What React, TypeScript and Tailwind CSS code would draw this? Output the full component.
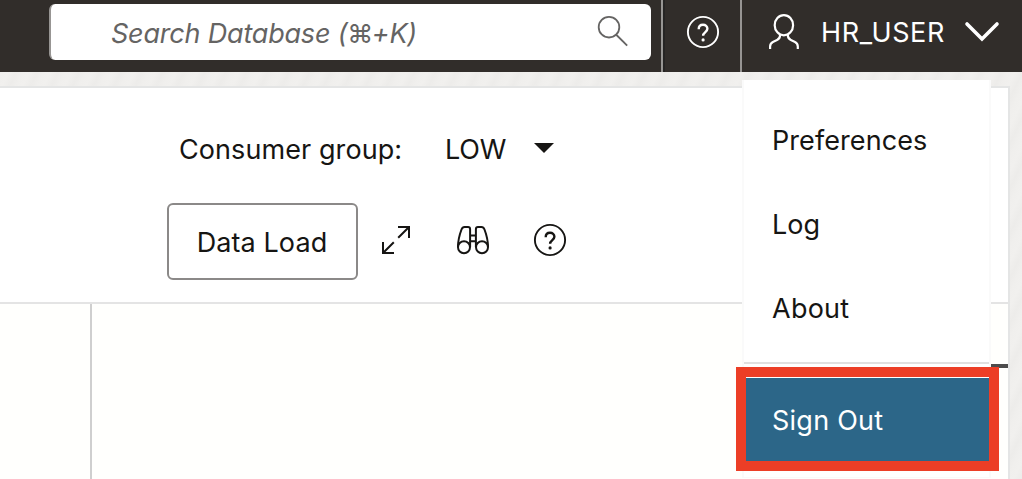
import React from "react";

function HelpIcon({ className }: { className: string }) {
  return (
    <svg className={className} width="34" height="34" viewBox="0 0 34 34" fill="none" stroke="currentColor" strokeWidth="1.9">
      <circle cx="17" cy="17" r="15.1" />
      <path d="M12.7 14.2c0-2.7 1.8-4.5 4.3-4.5s4.4 1.7 4.4 4.1c0 3.1-4.3 3.5-4.3 6.9" strokeWidth="2.4" />
      <circle cx="17.1" cy="24.9" r="1.6" fill="currentColor" stroke="none" />
    </svg>
  );
}

function SearchIcon() {
  return (
    <svg className="text-[#656463]" width="32" height="32" viewBox="0 0 32 32" fill="none" stroke="currentColor" strokeWidth="1.8">
      <circle cx="12" cy="11.2" r="10.3" />
      <path d="M19 18.5l11.2 11.2" />
    </svg>
  );
}

function UserIcon() {
  return (
    <svg width="32" height="36" viewBox="0 0 32 36" fill="none" stroke="currentColor" strokeWidth="2.2">
      <ellipse cx="15.9" cy="11.2" rx="9.2" ry="10.1" />
      <path d="M2.1 35v-2.6c0-2.2.9-3.6 2.8-4.5l4.1-1.8c2.2-.9 3.1-2.400 3.100-5M29.800 35v-2.600c0-2.200-.900-3.600-2.800-4.500l-4.100-1.800c-2.200-.900-3.100-2.400-3.100-5" />
    </svg>
  );
}

function ExpandIcon() {
  return (
    <svg width="30" height="30" viewBox="0 0 30 30" fill="none" stroke="currentColor" strokeWidth="2">
      <path d="M17 2h11v11M28 2L17.2 12.8M2 17v11h11M2 28l10.8-10.8" />
    </svg>
  );
}

function BinocularsIcon() {
  return (
    <svg width="34" height="30" viewBox="0 0 34 30" fill="none" stroke="currentColor" strokeWidth="2">
      <circle cx="8" cy="22.3" r="6" />
      <circle cx="26" cy="22.3" r="6" />
      <path d="M2 22c0-6 1.6-12.5 3.5-17.5C6.3 2.5 7 2 8.5 2H12c1.5 0 2.1.8 2.1 2.3V22M32 22c0-6-1.6-12.5-3.5-17.5C27.7 2.5 27 2 25.5 2H22c-1.5 0-2.1.8-2.1 2.3V22M14 10.5h6M14 16.3h6" />
    </svg>
  );
}

function Header() {
  return (
    <header className="flex h-[72px] bg-[#312d2a] text-white">
      <div className="w-[663px] shrink-0 border-r-2 border-[#979593] pl-[49px] pt-1">
        <div className="flex h-14 w-[602px] items-center justify-between rounded-md border-l-2 border-[#979593] bg-white pl-[60px] pr-[22px]">
          <span className="whitespace-nowrap pt-1 text-[27px] italic leading-[56px] tracking-[-0.2px] text-[#656463]">
            Search Database (<span className="text-[26px] not-italic tracking-[-1.6px]">⌘</span>+K)
          </span>
          <SearchIcon />
        </div>
      </div>
      <div className="w-[79px] shrink-0 border-l-2 border-r-2 border-l-[#252423] border-r-[#979593] pl-[21px] pt-[15px]">
        <HelpIcon className="text-white" />
      </div>
      <div className="flex flex-1 pl-[26px]">
        <div className="pt-[14px]"><UserIcon /></div>
        <span className="ml-[21px] w-[124px] whitespace-nowrap pt-[17px] text-[27px] leading-8 tracking-[0.6px]">HR_USER</span>
        <svg className="ml-[19px] mt-[21px]" width="36" height="21" viewBox="0 0 36 21" fill="none" stroke="currentColor" strokeWidth="3.6" strokeLinecap="round">
          <path d="M3 3l15 15L33 3" />
        </svg>
      </div>
    </header>
  );
}

function Toolbar() {
  return (
    <div className="h-[216px] border-b-2 border-[#e4e4e4] bg-white text-[27px] leading-8">
      <div className="flex h-[115px] pl-[179px] pt-[46px]">
        <span className="w-[266px] whitespace-nowrap tracking-[0.08px]">Consumer group:</span>
        <span className="w-[89px] tracking-[-0.2px]">LOW</span>
        <svg className="mt-[9px]" width="20" height="11" viewBox="0 0 20 11" fill="currentColor"><path d="M0 0h20L10 10z" /></svg>
      </div>
      <div className="flex pl-[167px]">
        <button className="h-[77px] w-[191px] whitespace-nowrap rounded-md border-2 border-[#8b8988] pr-px pt-0.5 tracking-[0.08px]">Data Load</button>
        <div className="ml-[23px] pt-[22px]"><ExpandIcon /></div>
        <div className="ml-[45px] pt-[22px]"><BinocularsIcon /></div>
        <div className="ml-[43px] pt-5"><HelpIcon className="text-[#161513]" /></div>
      </div>
    </div>
  );
}

function UserMenu() {
  return (
    <div className="absolute left-[742px] top-20 h-[398px] w-[249px] border-x-2 border-b border-[#fafafa] bg-white text-[27px] leading-8">
      <div className="flex flex-col border-b-2 border-[#e0e0e0] pb-[11px] pl-[28px] pt-[19px]">
        <span className="flex h-[84px] items-center tracking-[0.08px]">Preferences</span>
        <span className="flex h-[84px] items-center">Log</span>
        <span className="flex h-[84px] items-center tracking-[0.25px]">About</span>
      </div>
    </div>
  );
}

export default function App() {
  return (
    <div className="relative h-[479px] w-[1022px] overflow-hidden bg-[#efeeec] bg-[repeating-linear-gradient(115deg,#f1f0ee_0px,#edecea_7px,#f0efed_13px,#f1f0ee_19px)] font-['Inter','Noto_Sans',sans-serif] text-[#161513]">
      <Header />
      <main className="mt-[14px] h-[393px] w-[1010px] border-r-2 border-t-2 border-[#e4e5e5]">
        <Toolbar />
        <div className="flex h-[175px] bg-[#fffffd]">
          <div className="w-[92px] border-r-2 border-[#cfcfcf]" />
          <div className="flex flex-1 justify-end pt-[60px]">
            <div className="h-1 w-[17px] bg-[#4c4c4c]" />
          </div>
        </div>
      </main>
      <UserMenu />
      <div className="absolute left-[736px] top-[367px] h-[104px] w-[263px] border-[10px] border-[#ec3e26]">
        <div className="flex h-full items-center border-t border-white bg-[#2c6688] pl-[26px] pt-0.5 text-[27px] leading-8 tracking-[0.25px] text-white">Sign Out</div>
      </div>
    </div>
  );
}
